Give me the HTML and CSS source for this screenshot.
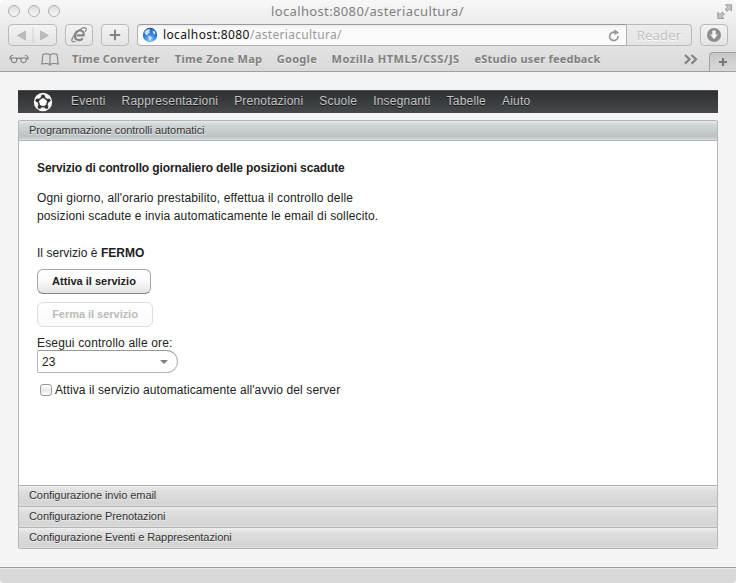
FILE: index.html
```html
<!DOCTYPE html>
<html lang="it">
<head>
<meta charset="utf-8">
<title>localhost:8080/asteriacultura/</title>
<link rel="stylesheet" href="styles.css">
</head>
<body>
<div class="window">
  <header class="chrome">
    <div class="titlebar">
      <div class="lights"><i></i><i></i><i></i></div>
      <div class="title">localhost:8080/asteriacultura/</div>
      <svg class="expand" width="16" height="16" viewBox="0 0 16 16" fill="#c4c4c4" stroke="#949494" stroke-width=".9"><path d="M8.500.8H14.500V7L12.500 5 10 7.400 8.200 5.600 10.600 3Z"/><path d="M7 14.500H.8V8.500L3 10.500 5.400 8 7.300 9.900 5 12.500Z"/></svg>
    </div>
    <div class="toolbar">
      <div class="btn nav">
        <svg width="48" height="20" viewBox="0 0 48 20"><path d="M16.500 6V15L8.500 10.500ZM31.500 6V15L39.500 10.500Z" fill="#bcbcbc" stroke="#a8a8a8" stroke-width=".6"/><path d="M24 2.500V18" stroke="#cfcfcf"/></svg>
      </div>
      <div class="btn ie">
        <svg width="18" height="18" viewBox="0 0 18 18" fill="none" stroke="#868686"><path d="M12.800 12.300C10.500 15.300 5 14.500 4.800 10.300 4.600 6.500 7.300 4.500 10 4.500 12.900 4.500 14.200 6.600 13.600 9.300H6.500" stroke-width="2.200"/><path d="M5.500 15.200C1.500 17.200.8 14.500 3.300 10.500 6.300 5.500 13.500.2 15.800 2 16.700 2.700 16.200 4.200 15.300 5.700" stroke-width="1.200"/></svg>
      </div>
      <div class="btn add"><svg width="12" height="12" viewBox="0 0 12 12"><path d="M6 .8V11.200M.8 6H11.200" stroke="#848484" stroke-width="2"/></svg></div>
      <div class="address">
        <svg width="16" height="16" viewBox="0 0 16 16"><defs><radialGradient id="g" cx=".5" cy=".85" r=".85"><stop offset="0" stop-color="#8ccbf8"/><stop offset=".5" stop-color="#3585dc"/><stop offset="1" stop-color="#234f9f"/></radialGradient></defs><circle cx="8" cy="8" r="7.200" fill="url(#g)"/><path d="M2.500 5Q4 2 7 2.200L8.500 3 7.300 4.500 7.800 6 5.500 7 6 8.300 4.500 8 3 7ZM6 9L8.500 9.300 9.800 10.800 8.300 13.500H7.500L7 11.500ZM10.500 3.500L12.500 4 13.500 6.500 12.700 7.500 11 6.300Z" fill="#d5ecfa" opacity=".9"/></svg>
        <span class="url"><b>localhost:8080</b>/asteriacultura/</span>
        <svg class="reload" width="12" height="13" viewBox="0 0 12 13"><path d="M10 7A4.200 4.200 0 1 1 6.800 3.300" fill="none" stroke="#999" stroke-width="1.700"/><path d="M6.300.2L11 3.500 6.300 6.200Z" fill="#999"/></svg>
      </div>
      <div class="reader">Reader</div>
      <div class="btn download"><svg width="16" height="16" viewBox="0 0 16 16"><circle cx="8" cy="8" r="7" fill="#8e8e8e"/><path d="M6.300 3.500H9.700V7.500H12L8 12.200 4 7.500H6.300Z" fill="#f4f4f4"/></svg></div>
    </div>
    <div class="bookmarks">
      <svg width="20" height="12" viewBox="0 0 20 12" fill="none" stroke="#808080" stroke-width="1.100"><path d="M2.500 5H7.500Q8.500 9.600 5.200 9.600 1.600 9.600 2.500 5ZM12 5H17Q18 9.600 14.500 9.600 11.200 9.600 12 5ZM8 5.800Q9.800 4.500 11.700 5.800M2.300 6H.8Q1 2.600 4 2.200M17.500 6H19.200Q19 2.600 16 2.200"/></svg>
      <svg class="book" width="18" height="14" viewBox="0 0 18 14" fill="none" stroke="#808080" stroke-width="1.100"><path d="M9 12.800Q7 10.800.8 12L2 2.300Q7 .8 9 3Q11 .8 16 2.300L17.200 12Q11 10.800 9 12.800V3"/></svg>
      <span class="bm time">Time Converter</span><span class="bm zone">Time Zone Map</span><span class="bm google">Google</span><span class="bm mozilla">Mozilla HTML5/CSS/JS</span><span class="bm studio">eStudio user feedback</span>
      <svg class="more" width="14" height="11" viewBox="0 0 14 11"><path d="M1 1L5.500 5.300 1 9.600M7.500 1L12 5.300 7.500 9.600" fill="none" stroke="#848484" stroke-width="2.200"/></svg>
      <div class="newtab"><svg width="8" height="8" viewBox="0 0 8 8"><path d="M4 0V8M0 4H8" stroke="#777" stroke-width="2"/></svg></div>
    </div>
  </header>
  <main>
    <nav class="menu">
      <svg class="logo" width="20" height="20" viewBox="0 0 20 20"><circle cx="10" cy="10" r="9.200" fill="#f7f7f7"/><path d="M10 4.700L15.200 8.500 13.200 14.600H6.800L4.800 8.500Z" fill="#fff" stroke="#444" stroke-width="1.700"/><g fill="#333"><circle cx="10" cy="4.300" r="1.900"/><circle cx="15.600" cy="8.300" r="1.900"/><circle cx="13.500" cy="14.900" r="1.900"/><circle cx="6.500" cy="14.900" r="1.900"/><circle cx="4.400" cy="8.300" r="1.900"/></g></svg>
      <a>Eventi</a><a>Rappresentazioni</a><a>Prenotazioni</a><a>Scuole</a><a>Insegnanti</a><a>Tabelle</a><a>Aiuto</a>
    </nav>
    <section class="accordion">
      <div class="head open">Programmazione controlli automatici</div>
      <div class="panel">
        <h1>Servizio di controllo giornaliero delle posizioni scadute</h1>
        <p>Ogni giorno, all'orario prestabilito, effettua il controllo delle<br>posizioni scadute e invia automaticamente le email di sollecito.</p>
        <div class="status">Il servizio è <b>FERMO</b></div>
        <button class="action">Attiva il servizio</button>
        <button class="action off" disabled>Ferma il servizio</button>
        <div class="label">Esegui controllo alle ore:</div>
        <div class="select">23<i></i></div>
        <div class="check"><i></i><span>Attiva il servizio automaticamente all'avvio del server</span></div>
      </div>
      <div class="head">Configurazione invio email</div>
      <div class="head">Configurazione Prenotazioni</div>
      <div class="head">Configurazione Eventi e Rappresentazioni</div>
    </section>
  </main>
  <footer></footer>
</div>
</body>
</html>
```
FILE: styles.css
```css
* { box-sizing: border-box; }
body { margin: 0; background: #fff; font: 12px/18px "Liberation Sans", Arial, sans-serif; color: #222; }
svg { display: block; flex: none; }
.window { width: 736px; height: 583px; display: flex; flex-direction: column; background: #f4f4f4; border-radius: 5px 5px 4px 4px; overflow: hidden; }
.chrome { height: 72px; background: linear-gradient(#f7f7f7, #e9e9e9 45%, #d9d9d9); border-bottom: 1px solid #a0a0a0; font-family: "Noto Sans", sans-serif; flex: none; }
.titlebar { height: 24px; display: flex; align-items: flex-start; padding: 4px 3px 0 8px; }
.lights { display: flex; gap: 8px; width: 263px; }
.lights i { width: 12px; height: 12px; margin-top: 1px; border: 1px solid #b0b0b0; border-radius: 50%; background: linear-gradient(#ddd, #f8f8f8); }
.title { flex: 1; font-size: 13px; line-height: 15px; letter-spacing: .36px; color: #808080; }
.toolbar { height: 22px; display: flex; padding: 0 8px; }
.btn { height: 22px; width: 28px; border: 1px solid #bababa; border-radius: 4px; background: linear-gradient(#f3f3f3, #e4e4e4); display: flex; align-items: center; justify-content: center; }
.nav { width: 49px; }
.ie { margin-left: 8px; }
.add { margin-left: 8px; }
.address { margin-left: 8px; width: 491px; border: 1px solid #b0b0b0; border-top-color: #999; border-radius: 4px 0 0 4px; background: linear-gradient(#eee, #fafafa 4px); display: flex; align-items: center; padding: 0 6px 0 4px; }
.url { margin-left: 5px; flex: 1; font-size: 12px; letter-spacing: .32px; color: #999; white-space: nowrap; }
.url b { font-weight: normal; color: #111; letter-spacing: .4px; }
.reader { width: 65px; border: 1px solid #bababa; border-left: 0; border-radius: 0 4px 4px 0; color: #c2c2c2; text-align: center; font-size: 13px; line-height: 21px; letter-spacing: .2px; text-shadow: 0 1px #fff; }
.download { margin-left: 8px; }
.bookmarks { height: 25px; display: flex; align-items: center; padding-left: 9px; font-weight: bold; font-size: 11px; color: #7f7f7f; white-space: nowrap; text-shadow: 0 1px #eee; letter-spacing: .3px; }
.book { margin-left: 12px; margin-right: 13px; }
.bm { width: 103px; }
.time { letter-spacing: .2px; }
.zone { width: 102px; }
.google { width: 55px; }
.mozilla { width: 143px; letter-spacing: .53px; }
.studio { width: 210px; letter-spacing: .2px; }
.more { margin-top: 2px; }
.newtab { margin-left: 11px; width: 27px; height: 19px; align-self: flex-end; border: 1px solid #a0a0a0; border-width: 1px 0 0 1px; border-radius: 4px 0 0 0; background: linear-gradient(#c8c8c8, #d8d8d8); display: flex; align-items: center; justify-content: center; }
main { flex: 1; padding: 18px 18px 0; }
.menu { width: 700px; height: 23px; background: linear-gradient(#2e3033, #45494c); border-top: 1px solid #4e5052; display: flex; align-items: center; padding-left: 15px; font-size: 12px; color: #c5c5c5; text-shadow: 0 1px #111; gap: 16px; line-height: 20px; letter-spacing: .2px; }
.menu a { margin-top: -2px; }
.logo { margin-right: 2px; }
.accordion { margin-top: 7px; border: 1px solid #b5b8ba; border-top: 0; border-radius: 2px; overflow: hidden; height: 429px; display: flex; flex-direction: column; }
.head { height: 21px; flex: none; border-top: 1px solid #b5b5b5; background: linear-gradient(#eee, #dedede 5px, #d4d4d4 18px, #e0e0e0); padding-left: 10px; font-size: 11px; line-height: 18px; letter-spacing: -.07px; color: #333; text-shadow: 0 1px #eee; }
.head.open { border-bottom: 1px solid #b5b8ba; background: linear-gradient(#e3e9ec, #d0d5d7 4px, #bdc3c5 16px, #d9e2e8); line-height: 19px; }
.panel { flex: 1; background: #fff; padding: 18px; }
h1 { margin: 0; font-size: 12px; line-height: 18px; letter-spacing: -.125px; }
p { margin: 12px 0 0; letter-spacing: .13px; }
.status { margin-top: 19px; letter-spacing: .04px; }
.action { display: block; width: 114px; height: 25px; margin: 7px 0 0; padding: 0 0 2px; border: 1px solid #a5a5a5; border-bottom-color: #858585; border-radius: 6px; background: linear-gradient(#fff, #fafafa 50%, #e2e2e2); font: bold 11px/20px "Liberation Sans", Arial, sans-serif; color: #222; }
.off { width: 116px; margin-top: 8px; border-color: #ddd; background: linear-gradient(#fff, #fafafa); color: #bbb; letter-spacing: -.03px; }
.label { margin-top: 7px; line-height: 18px; letter-spacing: .16px; }
.select { margin-top: -2px; width: 141px; height: 23px; border: 1px solid #b5b5b5; border-top-color: #999; border-radius: 2px 12px 12px 2px; padding: 0 9px 0 4px; display: flex; justify-content: space-between; align-items: center; letter-spacing: .2px; }
.select i { border: 4px solid transparent; border-top-color: #808080; border-bottom: 0; }
.check { margin-top: 8px; display: flex; align-items: center; padding-left: 3px; gap: 3px; letter-spacing: .1px; }
.check i { width: 12px; height: 12px; border: 1px solid #999; border-radius: 3px; background: linear-gradient(#fff, #e9e9e9 50%, #fafafa); }
footer { height: 16px; border-top: 1px solid #999; background: #d9d9d9; box-shadow: inset 0 1px #eaeaea; }
```
